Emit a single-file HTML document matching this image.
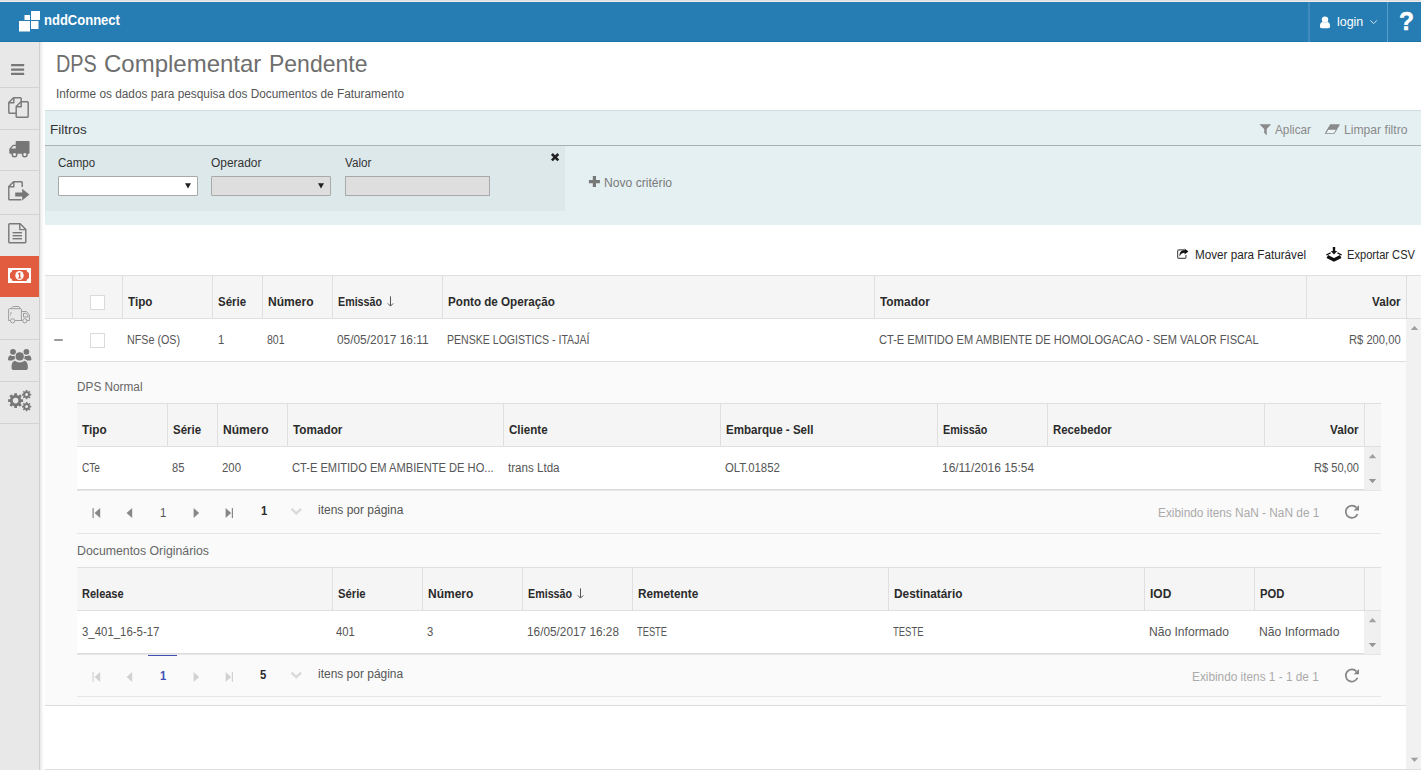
<!DOCTYPE html>
<html lang="pt-br"><head><meta charset="utf-8"><title>DPS Complementar Pendente</title>
<style>
html,body{margin:0;padding:0;background:#fff;}
body{width:1421px;height:770px;overflow:hidden;position:relative;font-family:"Liberation Sans",sans-serif;}
#app{position:absolute;left:0;top:0;width:1421px;height:770px;overflow:hidden;background:#fff;}
.t{position:absolute;white-space:nowrap;transform-origin:0 0;display:block;}
.b{position:absolute;display:block;}
svg{position:absolute;left:0;top:0;overflow:visible;}
header,nav,main,section,h1,h2{display:block;margin:0;padding:0;font:inherit;}
</style></head><body><div id="app">

<header>
<div class="b" style="left:0;top:0;width:1421px;height:2px;background:linear-gradient(#d9d9d9,#f4f4f4);"></div>
<div class="b" id="hdr" style="left:0;top:2px;width:1421px;height:40px;background:#267db3;box-sizing:border-box;border-bottom:1px solid #1f74ac;"></div>
<div class="b" style="left:1308px;top:2px;width:2px;height:40px;background:#3f8bbd;"></div>
<div class="b" style="left:1387px;top:2px;width:1px;height:40px;background:#5a9dc7;"></div>
<svg width="1421" height="42" viewBox="0 0 1421 42">
<g fill="#fff">
<rect x="19" y="21" width="11" height="10.5"/>
<rect x="31" y="11" width="9" height="9"/>
<rect x="24.5" y="15" width="5.5" height="5"/>
<rect x="31" y="21" width="7.5" height="8"/>
<!-- user -->
<circle cx="1325" cy="19.6" r="3.2"/>
<path d="M1319.900 26.300 c0-3 1.200-4.300 3-4.400 c1.200 1 3 1 4.200 0 c1.800 .1 3 1.400 3 4.400 c0 1.200-.7 1.900-1.800 1.900 h-6.600 c-1.100 0-1.800-.7-1.800-1.900 z"/>
</g>
<path d="M1370.3 20.3 l3.3 3.4 l3.3-3.4" fill="none" stroke="#cfe2ee" stroke-width="1"/>
</svg>
<span class="t" style="left:43.55px;top:11.50px;font-size:14.6px;line-height:17px;font-weight:bold;color:#fff;transform:scaleX(0.8921);">nddConnect</span>
<span class="t" style="left:1336.75px;top:13.80px;font-size:13.5px;line-height:16px;color:#fff;transform:scaleX(0.9211);">login</span>
<span class="t" style="left:1398.85px;top:6.90px;font-size:26.5px;line-height:29px;font-weight:bold;color:#fff;transform:scaleX(0.9279);-webkit-text-stroke:.5px #fff;">?</span>
</header>
<nav>
<div class="b" style="left:0;top:42px;width:39px;height:728px;background:#e8e8e8;border-right:1px solid #cfcfcf;"></div>
<div class="b" style="left:40px;top:42px;width:5px;height:728px;background:linear-gradient(90deg,#e6e6e6,#f7f7f7 45%,#fff 85%);"></div>
<div class="b" style="left:0;top:87px;width:39px;height:1px;background:#d2d2d2;"></div>
<div class="b" style="left:0;top:129px;width:39px;height:1px;background:#d2d2d2;"></div>
<div class="b" style="left:0;top:170px;width:39px;height:1px;background:#d2d2d2;"></div>
<div class="b" style="left:0;top:214px;width:39px;height:1px;background:#d2d2d2;"></div>
<div class="b" style="left:0;top:339px;width:39px;height:1px;background:#d2d2d2;"></div>
<div class="b" style="left:0;top:381px;width:39px;height:1px;background:#d2d2d2;"></div>
<div class="b" style="left:0;top:423px;width:39px;height:1px;background:#d2d2d2;"></div>
<div class="b" style="left:0;top:256px;width:39px;height:41px;background:#e25c40;"></div>
<svg width="40" height="770" viewBox="0 0 40 770">
<g fill="#777">
<!-- bars -->
<rect x="11" y="64" width="13.2" height="2.3" rx=".6"/><rect x="11" y="68.4" width="13.2" height="2.3" rx=".6"/><rect x="11" y="72.8" width="13.2" height="2.3" rx=".6"/>
</g>
<!-- files-o -->
<g fill="none" stroke="#7a7a7a" stroke-width="1.45" stroke-linejoin="round">
<path d="M16.2 113.2 H9.6 a.8 .8 0 0 1 -.8 -.8 V102.5 L13.5 97.8 H20.4 a.8 .8 0 0 1 .8 .8 V101.8"/>
<path d="M8.8 102.8 H13.8 V97.8"/>
<path d="M16.2 106.5 L20.9 101.8 H27.4 a.8 .8 0 0 1 .8 .8 V116.4 a.8 .8 0 0 1 -.8 .8 H17 a.8 .8 0 0 1 -.8 -.8 Z"/>
<path d="M16.2 106.8 H21.2 V101.8"/>
</g>
<!-- truck -->
<g fill="#777">
<path d="M16.4 141 H28.800 a.7 .7 0 0 1 .7 .7 V153 a.7 .7 0 0 1 -.7 .7 H10 a.7 .7 0 0 1 -.7 -.7 V149.200 q0-.6 .4-1 l2.700-3 q.4-.5 1-.5 H15.700 V141.700 a.7 .7 0 0 1 .7 -.7 Z M11 148.600 H15.700 V146 H13.800 q-.3 0-.5 .2 l-2.100 2.100 q-.2 .2-.2 .3 Z"/>
<circle cx="14.500" cy="154.400" r="3"/><circle cx="24.800" cy="154.400" r="3"/>
</g>
<circle cx="14.500" cy="154.400" r="1.500" fill="#eee"/><circle cx="24.800" cy="154.400" r="1.500" fill="#eee"/>
<!-- sign-out doc -->
<g fill="none" stroke="#7a7a7a" stroke-width="1.45" stroke-linejoin="round">
<path d="M22.2 187 V182.6 a.8 .8 0 0 0 -.8 -.8 H13.5 L8.8 186.5 V199 a.8 .8 0 0 0 .8 .8 H21.4"/>
<path d="M8.8 186.8 H13.8 V181.8"/>
</g>
<path d="M15.2 192.6 H22.2 V188.8 L29.3 194.6 L22.2 200.4 V196.6 H15.2 Z" fill="#777"/>
<!-- file-text-o -->
<g fill="none" stroke="#7a7a7a" stroke-width="1.45" stroke-linejoin="round">
<path d="M8.8 224.6 a.8 .8 0 0 1 .8 -.8 H20.2 L25.8 229.4 V242 a.8 .8 0 0 1 -.8 .8 H9.6 a.8 .8 0 0 1 -.8 -.8 Z"/>
<path d="M19.8 223.8 V229.6 H25.8"/>
</g>
<g fill="#777"><rect x="12.6" y="232" width="9.4" height="1.4"/><rect x="12.6" y="235" width="9.4" height="1.4"/><rect x="12.6" y="238" width="9.4" height="1.4"/></g>
<!-- money -->
<rect x="8" y="268" width="23" height="15" fill="#fff"/>
<path d="M12.5 270 H26.5 Q27 272.5 29 273 V278 Q27 278.5 26.5 281 H12.5 Q12 278.5 10 278 V273 Q12 272.5 12.5 270 Z" fill="#e25c40"/>
<ellipse cx="19.5" cy="275.5" rx="4.2" ry="4.6" fill="#fff"/>
<path d="M18 273.6 L19.4 272.4 H20.4 V277.6 H21.4 V278.6 H17.8 V277.6 H19 V274 L18 274.8 Z" fill="#e25c40"/>
<!-- truck outline -->
<g fill="none" stroke="#959595" stroke-width=".9">
<path d="M8.6 320.5 V309.5 a.8 .8 0 0 1 .8 -.8 H20.6 a.8 .8 0 0 1 .8 .8 V320.5"/>
<path d="M11 308.6 L13 306.5 H19 L20.5 308.6"/>
<path d="M21.4 311.5 H26.5 L29.4 315 V320.5 H27.2 M21.4 320.5 H22.4 M8.6 320.5 H10.2 M15 320.5 H22"/>
<path d="M23.5 313.3 H26 L27.8 315.6 V317 H23.5 Z"/>
<circle cx="12.6" cy="320.8" r="2.1"/><circle cx="24.8" cy="320.8" r="2.1"/>
<path d="M10 313 H12 M10 315 H11"/>
</g>
<!-- users -->
<g fill="#777">
<circle cx="13" cy="351.8" r="2.9"/><circle cx="26.4" cy="351.8" r="2.9"/>
<path d="M8 359.8 q0-4.2 2.6-4.6 q1 .9 2.6 .9 q.9 0 1.6-.3 q-.4 1.6 .5 3.2 q-1.900 .1 -3 1.600 H9.500 Q8 360.600 8 359.800 Z"/>
<path d="M31.400 359.800 q0-4.200-2.600-4.600 q-1 .900-2.600 .900 q-.900 0-1.600-.300 q.400 1.600-.500 3.200 q1.900 .100 3 1.600 H29.900 Q31.400 360.600 31.400 359.800 Z"/>
<circle cx="19.700" cy="356.400" r="4.100"/>
<path d="M11.500 367.400 q0-6 3.400-6.600 q2 1.700 4.800 1.700 q2.800 0 4.800-1.700 q3.400 .600 3.400 6.600 q0 2.600-2.600 2.600 H14.100 q-2.600 0-2.600-2.600 Z"/>
</g>
</svg>
<svg width="40" height="770" viewBox="0 0 40 770"><g fill="#777">
<path fill-rule="evenodd" d="M21.13 399.23 L23.07 399.22 L23.07 401.98 L21.13 401.97 L20.48 403.54 L21.86 404.91 L19.91 406.86 L18.54 405.48 L16.97 406.13 L16.98 408.07 L14.22 408.07 L14.23 406.13 L12.66 405.48 L11.29 406.86 L9.34 404.91 L10.72 403.54 L10.07 401.97 L8.13 401.98 L8.13 399.22 L10.07 399.23 L10.72 397.66 L9.34 396.29 L11.29 394.34 L12.66 395.72 L14.23 395.07 L14.22 393.13 L16.98 393.13 L16.97 395.07 L18.54 395.72 L19.91 394.34 L21.86 396.29 L20.48 397.66 Z M12.80 400.60 a2.80 2.80 0 1 0 5.60 0 a2.80 2.80 0 1 0 -5.60 0 Z"/>
<path fill-rule="evenodd" d="M29.90 393.78 L31.22 393.75 L31.22 395.45 L29.90 395.42 L29.51 396.35 L30.47 397.26 L29.26 398.47 L28.35 397.51 L27.42 397.90 L27.45 399.22 L25.75 399.22 L25.78 397.90 L24.85 397.51 L23.94 398.47 L22.73 397.26 L23.69 396.35 L23.30 395.42 L21.98 395.45 L21.98 393.75 L23.30 393.78 L23.69 392.85 L22.73 391.94 L23.94 390.73 L24.85 391.69 L25.78 391.30 L25.75 389.98 L27.45 389.98 L27.42 391.30 L28.35 391.69 L29.26 390.73 L30.47 391.94 L29.51 392.85 Z M25.10 394.60 a1.50 1.50 0 1 0 3.00 0 a1.50 1.50 0 1 0 -3.00 0 Z"/>
<path fill-rule="evenodd" d="M29.90 405.78 L31.22 405.75 L31.22 407.45 L29.90 407.42 L29.51 408.35 L30.47 409.26 L29.26 410.47 L28.35 409.51 L27.42 409.90 L27.45 411.22 L25.75 411.22 L25.78 409.90 L24.85 409.51 L23.94 410.47 L22.73 409.26 L23.69 408.35 L23.30 407.42 L21.98 407.45 L21.98 405.75 L23.30 405.78 L23.69 404.85 L22.73 403.94 L23.94 402.73 L24.85 403.69 L25.78 403.30 L25.75 401.98 L27.45 401.98 L27.42 403.30 L28.35 403.69 L29.26 402.73 L30.47 403.94 L29.51 404.85 Z M25.10 406.60 a1.50 1.50 0 1 0 3.00 0 a1.50 1.50 0 1 0 -3.00 0 Z"/>
</g></svg>
</nav>
<main>
<h1>
<span class="t" style="left:55.55px;top:51.00px;font-size:23.6px;line-height:26px;color:#6e6e6e;transform:scaleX(0.8413);">DPS</span>
<span class="t" style="left:104.15px;top:51.00px;font-size:23.6px;line-height:26px;color:#6e6e6e;transform:scaleX(1.0167);">Complementar</span>
<span class="t" style="left:268.95px;top:51.00px;font-size:23.6px;line-height:26px;color:#6e6e6e;transform:scaleX(0.9742);">Pendente</span>
</h1>
<span class="t" style="left:55.55px;top:87.00px;font-size:12px;line-height:14px;color:#555;transform:scaleX(0.9862);">Informe os dados para pesquisa dos Documentos de Faturamento</span>
<section>
<div class="b" style="left:45px;top:110px;width:1376px;height:115px;background:#e5f0f3;border-top:1px solid #d3dcdf;box-sizing:border-box;"></div>
<div class="b" style="left:45px;top:145px;width:1376px;height:1px;background:#a9b1b4;"></div>
<div class="b" style="left:45px;top:146px;width:520px;height:65px;background:#dde8eb;"></div>
<span class="t" style="left:50.15px;top:121.50px;font-size:13.4px;line-height:16px;color:#333;transform:scaleX(1.0069);">Filtros</span>
<span class="t" style="left:1274.55px;top:122.00px;font-size:13px;line-height:15px;color:#8a8a8a;transform:scaleX(0.9065);">Aplicar</span>
<span class="t" style="left:1343.55px;top:122.00px;font-size:13px;line-height:15px;color:#8a8a8a;transform:scaleX(0.9349);">Limpar filtro</span>
<span class="t" style="left:58.05px;top:156.00px;font-size:12px;line-height:14px;color:#333;transform:scaleX(0.9587);">Campo</span>
<span class="t" style="left:211.15px;top:156.00px;font-size:12px;line-height:14px;color:#333;transform:scaleX(0.9941);">Operador</span>
<span class="t" style="left:344.55px;top:156.00px;font-size:12px;line-height:14px;color:#333;transform:scaleX(0.9735);">Valor</span>
<span class="t" style="left:604.15px;top:174.80px;font-size:13px;line-height:15px;color:#7a7a7a;transform:scaleX(0.9329);">Novo critério</span>
<div class="b" style="left:58px;top:176px;width:140px;height:20px;box-sizing:border-box;border:1px solid #a9a9a9;border-radius:1px;background:#fff;"></div>
<div class="b" style="left:211px;top:176px;width:120px;height:20px;box-sizing:border-box;border:1px solid #a9a9a9;border-radius:1px;background:#dedede;"></div>
<div class="b" style="left:345px;top:176px;width:145px;height:20px;box-sizing:border-box;border:1px solid #a9a9a9;background:#dedede;"></div>
<svg width="1421" height="300" viewBox="0 0 1421 300">
<path d="M185 183.200 h6 l-3 5.400 z" fill="#222"/>
<path d="M318 183.200 h6 l-3 5.400 z" fill="#222"/>
<!-- close x -->
<path d="M551.900 154 l6.400 6.400 M558.300 154 l-6.400 6.400" stroke="#222" stroke-width="2.600" fill="none"/>
<!-- plus -->
<path d="M594.400 176.100 v11 M588.900 181.600 h11" stroke="#787878" stroke-width="3.200" fill="none"/>
<!-- filter funnel -->
<path d="M1260 124.300 h10.600 q.500 0 .200 .500 l-4.100 4.300 v5.800 q0 .400-.400 .100 l-2.100-1.900 v-4 l-4.400-4.300 q-.300-.500 .200-.500 z" fill="#8a8a8a"/>
<!-- eraser -->
<path d="M1330.200 124.300 h9.900 l-5.600 9.500 h-9.900 z" fill="#8a8a8a"/>
<path d="M1328.300 129.800 H1335.800 L1333.900 133 H1326.400 z" fill="#eef5f7"/>
<!-- share-square (mover) -->
<path d="M1184 249.800 H1179 a1.400 1.400 0 0 0 -1.400 1.400 V257 a1.400 1.400 0 0 0 1.400 1.400 H1184.600 a1.400 1.400 0 0 0 1.400 -1.400 V255" fill="none" stroke="#555" stroke-width="1.200"/>
<path d="M1188.400 251.400 L1184.600 248.400 V250.200 C1181.400 250.200 1179.300 252 1179.500 256.800 C1180.500 254.100 1182 252.800 1184.600 252.800 V254.500 Z" fill="#111"/>
<!-- download tray -->
<path d="M1332.800 247 h2.400 v4 h2 l-3.200 3.500 l-3.200-3.500 h2 z" fill="#111"/>
<path d="M1327.300 256.500 L1334 259.900 L1340.700 256.500" fill="none" stroke="#111" stroke-width="3.300" stroke-linejoin="miter"/>
<path d="M1326.300 255 L1330.600 252.900 M1341.700 255 L1337.400 252.900" fill="none" stroke="#111" stroke-width="1.300"/>
</svg>
</section>
<span class="t" style="left:1194.55px;top:248.00px;font-size:12px;line-height:14px;color:#262626;transform:scaleX(0.9732);">Mover para Faturável</span>
<span class="t" style="left:1346.55px;top:248.00px;font-size:12px;line-height:14px;color:#262626;transform:scaleX(0.9267);">Exportar CSV</span>
<section>
<div class="b" style="left:45px;top:275px;width:1376px;height:1px;background:#dfdfdf;"></div>
<div class="b" style="left:45px;top:276px;width:1376px;height:42px;background:#f5f5f5;"></div>
<div class="b" style="left:45px;top:318px;width:1376px;height:1px;background:#dfdfdf;"></div>
<div class="b" style="left:72px;top:276px;width:1px;height:42px;background:#dfdfdf;"></div>
<div class="b" style="left:122px;top:276px;width:1px;height:42px;background:#dfdfdf;"></div>
<div class="b" style="left:212px;top:276px;width:1px;height:42px;background:#dfdfdf;"></div>
<div class="b" style="left:262px;top:276px;width:1px;height:42px;background:#dfdfdf;"></div>
<div class="b" style="left:332px;top:276px;width:1px;height:42px;background:#dfdfdf;"></div>
<div class="b" style="left:442px;top:276px;width:1px;height:42px;background:#dfdfdf;"></div>
<div class="b" style="left:874px;top:276px;width:1px;height:42px;background:#dfdfdf;"></div>
<div class="b" style="left:1306px;top:276px;width:1px;height:42px;background:#dfdfdf;"></div>
<div class="b" style="left:1406px;top:276px;width:1px;height:42px;background:#dfdfdf;"></div>
<div class="b" style="left:45px;top:361px;width:1362px;height:1px;background:#dfdfdf;"></div>
<div class="b" style="left:45px;top:362px;width:1362px;height:343px;background:#fafafa;"></div>
<div class="b" style="left:45px;top:705px;width:1362px;height:1px;background:#dcdcdc;"></div>
<div class="b" style="left:1406px;top:319px;width:15px;height:450px;background:#f1f1f1;"></div>
<div class="b" style="left:45px;top:769px;width:1376px;height:1px;background:#dedede;"></div>
<div class="b" style="left:90px;top:295px;width:15px;height:15px;background:#fff;box-sizing:border-box;border:1px solid #dadada;"></div>
<div class="b" style="left:90px;top:333px;width:15px;height:15px;background:#fff;box-sizing:border-box;border:1px solid #dadada;"></div>
<div class="b" style="left:53.5px;top:338.7px;width:9.3px;height:2.8px;background:#9a9a9a;border-radius:1px;"></div>
<span class="t" style="left:128.15px;top:294.60px;font-size:12px;line-height:14px;font-weight:bold;color:#2b2b2b;transform:scaleX(0.9729);">Tipo</span>
<span class="t" style="left:217.55px;top:294.60px;font-size:12px;line-height:14px;font-weight:bold;color:#2b2b2b;transform:scaleX(0.9543);">Série</span>
<span class="t" style="left:267.95px;top:294.60px;font-size:12px;line-height:14px;font-weight:bold;color:#2b2b2b;transform:scaleX(1.0053);">Número</span>
<span class="t" style="left:338.15px;top:294.60px;font-size:12px;line-height:14px;font-weight:bold;color:#2b2b2b;transform:scaleX(0.8910);">Emissão</span>
<span class="t" style="left:448.15px;top:294.60px;font-size:12px;line-height:14px;font-weight:bold;color:#2b2b2b;transform:scaleX(0.9706);">Ponto de Operação</span>
<span class="t" style="left:880.15px;top:294.60px;font-size:12px;line-height:14px;font-weight:bold;color:#2b2b2b;transform:scaleX(0.9869);">Tomador</span>
<span class="t" style="left:1371.95px;top:294.60px;font-size:12px;line-height:14px;font-weight:bold;color:#2b2b2b;transform:scaleX(0.9748);">Valor</span>
<span class="t" style="left:126.95px;top:333.00px;font-size:12px;line-height:14px;color:#555;transform:scaleX(0.8932);">NFSe (OS)</span>
<span class="t" style="left:218.15px;top:333.00px;font-size:12px;line-height:14px;color:#555;transform:scaleX(0.9400);">1</span>
<span class="t" style="left:266.95px;top:333.00px;font-size:12px;line-height:14px;color:#555;transform:scaleX(0.8782);">801</span>
<span class="t" style="left:336.95px;top:333.00px;font-size:12px;line-height:14px;color:#555;transform:scaleX(0.9901);">05/05/2017 16:11</span>
<span class="t" style="left:447.15px;top:333.00px;font-size:12px;line-height:14px;color:#555;transform:scaleX(0.8800);">PENSKE LOGISTICS - ITAJAÍ</span>
<span class="t" style="left:878.95px;top:333.00px;font-size:12px;line-height:14px;color:#555;transform:scaleX(0.9232);">CT-E EMITIDO EM AMBIENTE DE HOMOLOGACAO - SEM VALOR FISCAL</span>
<span class="t" style="left:1348.95px;top:333.00px;font-size:12px;line-height:14px;color:#555;transform:scaleX(0.9317);">R$ 200,00</span>
<span class="t" style="left:77.05px;top:380.00px;font-size:12px;line-height:14px;color:#666;transform:scaleX(0.9826);">DPS Normal</span>
<span class="t" style="left:76.95px;top:544.00px;font-size:12px;line-height:14px;color:#666;transform:scaleX(1.0256);">Documentos Originários</span>
<div class="b" style="left:77px;top:403px;width:1304px;height:1px;background:#dfdfdf;"></div>
<div class="b" style="left:77px;top:404px;width:1304px;height:42px;background:#f5f5f5;"></div>
<div class="b" style="left:77px;top:446px;width:1304px;height:1px;background:#dfdfdf;"></div>
<div class="b" style="left:167px;top:404px;width:1px;height:42px;background:#dfdfdf;"></div>
<div class="b" style="left:217px;top:404px;width:1px;height:42px;background:#dfdfdf;"></div>
<div class="b" style="left:287px;top:404px;width:1px;height:42px;background:#dfdfdf;"></div>
<div class="b" style="left:503px;top:404px;width:1px;height:42px;background:#dfdfdf;"></div>
<div class="b" style="left:720px;top:404px;width:1px;height:42px;background:#dfdfdf;"></div>
<div class="b" style="left:937px;top:404px;width:1px;height:42px;background:#dfdfdf;"></div>
<div class="b" style="left:1047px;top:404px;width:1px;height:42px;background:#dfdfdf;"></div>
<div class="b" style="left:1264px;top:404px;width:1px;height:42px;background:#dfdfdf;"></div>
<div class="b" style="left:1364px;top:404px;width:1px;height:42px;background:#dfdfdf;"></div>
<div class="b" style="left:77px;top:447px;width:1287px;height:42px;background:#fff;"></div>
<div class="b" style="left:1364px;top:447px;width:17px;height:43px;background:#f0f0f0;"></div>
<div class="b" style="left:77px;top:489px;width:1287px;height:1px;background:#dcdcdc;"></div>
<div class="b" style="left:77px;top:490px;width:1304px;height:1px;background:#e6e6e6;"></div>
<div class="b" style="left:77px;top:533px;width:1304px;height:1px;background:#e6e6e6;"></div>
<div class="b" style="left:77px;top:567px;width:1304px;height:1px;background:#dfdfdf;"></div>
<div class="b" style="left:77px;top:568px;width:1304px;height:42px;background:#f5f5f5;"></div>
<div class="b" style="left:77px;top:610px;width:1304px;height:1px;background:#dfdfdf;"></div>
<div class="b" style="left:332px;top:568px;width:1px;height:42px;background:#dfdfdf;"></div>
<div class="b" style="left:422px;top:568px;width:1px;height:42px;background:#dfdfdf;"></div>
<div class="b" style="left:522px;top:568px;width:1px;height:42px;background:#dfdfdf;"></div>
<div class="b" style="left:632px;top:568px;width:1px;height:42px;background:#dfdfdf;"></div>
<div class="b" style="left:888px;top:568px;width:1px;height:42px;background:#dfdfdf;"></div>
<div class="b" style="left:1144px;top:568px;width:1px;height:42px;background:#dfdfdf;"></div>
<div class="b" style="left:1254px;top:568px;width:1px;height:42px;background:#dfdfdf;"></div>
<div class="b" style="left:1364px;top:568px;width:1px;height:42px;background:#dfdfdf;"></div>
<div class="b" style="left:77px;top:611px;width:1287px;height:42px;background:#fff;"></div>
<div class="b" style="left:1364px;top:611px;width:17px;height:43px;background:#f0f0f0;"></div>
<div class="b" style="left:77px;top:653px;width:1287px;height:1px;background:#dcdcdc;"></div>
<div class="b" style="left:77px;top:654px;width:1304px;height:1px;background:#e6e6e6;"></div>
<div class="b" style="left:77px;top:696px;width:1304px;height:1px;background:#e6e6e6;"></div>
<span class="t" style="left:81.95px;top:422.60px;font-size:12px;line-height:14px;font-weight:bold;color:#2b2b2b;transform:scaleX(0.9809);">Tipo</span>
<span class="t" style="left:172.55px;top:422.60px;font-size:12px;line-height:14px;font-weight:bold;color:#2b2b2b;transform:scaleX(0.9543);">Série</span>
<span class="t" style="left:222.95px;top:422.60px;font-size:12px;line-height:14px;font-weight:bold;color:#2b2b2b;transform:scaleX(1.0053);">Número</span>
<span class="t" style="left:293.15px;top:422.60px;font-size:12px;line-height:14px;font-weight:bold;color:#2b2b2b;transform:scaleX(0.9790);">Tomador</span>
<span class="t" style="left:508.95px;top:422.60px;font-size:12px;line-height:14px;font-weight:bold;color:#2b2b2b;transform:scaleX(0.9645);">Cliente</span>
<span class="t" style="left:725.95px;top:422.60px;font-size:12px;line-height:14px;font-weight:bold;color:#2b2b2b;transform:scaleX(0.9645);">Embarque - Sell</span>
<span class="t" style="left:942.95px;top:422.60px;font-size:12px;line-height:14px;font-weight:bold;color:#2b2b2b;transform:scaleX(0.8991);">Emissão</span>
<span class="t" style="left:1053.25px;top:422.60px;font-size:12px;line-height:14px;font-weight:bold;color:#2b2b2b;transform:scaleX(0.9478);">Recebedor</span>
<span class="t" style="left:1329.95px;top:422.60px;font-size:12px;line-height:14px;font-weight:bold;color:#2b2b2b;transform:scaleX(0.9748);">Valor</span>
<span class="t" style="left:81.55px;top:461.00px;font-size:12px;line-height:14px;color:#555;transform:scaleX(0.8427);">CTe</span>
<span class="t" style="left:171.55px;top:461.00px;font-size:12px;line-height:14px;color:#555;transform:scaleX(0.9309);">85</span>
<span class="t" style="left:221.55px;top:461.00px;font-size:12px;line-height:14px;color:#555;transform:scaleX(0.9481);">200</span>
<span class="t" style="left:291.55px;top:461.00px;font-size:12px;line-height:14px;color:#555;transform:scaleX(0.9274);">CT-E EMITIDO EM AMBIENTE DE HO...</span>
<span class="t" style="left:507.95px;top:461.00px;font-size:12px;line-height:14px;color:#555;transform:scaleX(0.9663);">trans Ltda</span>
<span class="t" style="left:724.75px;top:461.00px;font-size:12px;line-height:14px;color:#555;transform:scaleX(0.9474);">OLT.01852</span>
<span class="t" style="left:942.35px;top:461.00px;font-size:12px;line-height:14px;color:#555;transform:scaleX(0.9944);">16/11/2016 15:54</span>
<span class="t" style="left:1313.55px;top:461.00px;font-size:12px;line-height:14px;color:#555;transform:scaleX(0.9236);">R$ 50,00</span>
<span class="t" style="left:81.95px;top:586.60px;font-size:12px;line-height:14px;font-weight:bold;color:#2b2b2b;transform:scaleX(0.9171);">Release</span>
<span class="t" style="left:337.55px;top:586.60px;font-size:12px;line-height:14px;font-weight:bold;color:#2b2b2b;transform:scaleX(0.9407);">Série</span>
<span class="t" style="left:428.15px;top:586.60px;font-size:12px;line-height:14px;font-weight:bold;color:#2b2b2b;transform:scaleX(0.9987);">Número</span>
<span class="t" style="left:527.95px;top:586.60px;font-size:12px;line-height:14px;font-weight:bold;color:#2b2b2b;transform:scaleX(0.8931);">Emissão</span>
<span class="t" style="left:637.95px;top:586.60px;font-size:12px;line-height:14px;font-weight:bold;color:#2b2b2b;transform:scaleX(0.9824);">Remetente</span>
<span class="t" style="left:894.05px;top:586.60px;font-size:12px;line-height:14px;font-weight:bold;color:#2b2b2b;transform:scaleX(0.9876);">Destinatário</span>
<span class="t" style="left:1149.85px;top:586.60px;font-size:12px;line-height:14px;font-weight:bold;color:#2b2b2b;transform:scaleX(0.9972);">IOD</span>
<span class="t" style="left:1260.25px;top:586.60px;font-size:12px;line-height:14px;font-weight:bold;color:#2b2b2b;transform:scaleX(0.9353);">POD</span>
<span class="t" style="left:81.55px;top:625.00px;font-size:12px;line-height:14px;color:#555;transform:scaleX(0.9506);">3_401_16-5-17</span>
<span class="t" style="left:336.45px;top:625.00px;font-size:12px;line-height:14px;color:#555;transform:scaleX(0.9431);">401</span>
<span class="t" style="left:427.15px;top:625.00px;font-size:12px;line-height:14px;color:#555;transform:scaleX(0.9400);">3</span>
<span class="t" style="left:527.35px;top:625.00px;font-size:12px;line-height:14px;color:#555;transform:scaleX(0.9848);">16/05/2017 16:28</span>
<span class="t" style="left:637.35px;top:625.00px;font-size:12px;line-height:14px;color:#555;transform:scaleX(0.7752);">TESTE</span>
<span class="t" style="left:892.85px;top:625.00px;font-size:12px;line-height:14px;color:#555;transform:scaleX(0.7881);">TESTE</span>
<span class="t" style="left:1149.05px;top:625.00px;font-size:12px;line-height:14px;color:#555;transform:scaleX(1.0066);">Não Informado</span>
<span class="t" style="left:1258.65px;top:625.00px;font-size:12px;line-height:14px;color:#555;transform:scaleX(1.0128);">Não Informado</span>
<span class="t" style="left:160.35px;top:506.00px;font-size:12px;line-height:14px;color:#555;transform:scaleX(0.9400);">1</span>
<span class="t" style="left:260.75px;top:503.80px;font-size:12px;line-height:14px;font-weight:bold;color:#2b2b2b;transform:scaleX(0.9400);">1</span>
<span class="t" style="left:317.55px;top:503.00px;font-size:12px;line-height:14px;color:#555;transform:scaleX(0.9995);">itens por página</span>
<span class="t" style="left:1157.55px;top:506.00px;font-size:12px;line-height:14px;color:#aaa;transform:scaleX(0.9875);">Exibindo itens NaN - NaN de 1</span>
<div class="b" style="left:148px;top:654.8px;width:29px;height:1.4px;background:#3f51b5;"></div>
<span class="t" style="left:160.15px;top:669.00px;font-size:12px;line-height:14px;font-weight:bold;color:#3f51b5;transform:scaleX(0.9400);">1</span>
<span class="t" style="left:260.35px;top:667.60px;font-size:12px;line-height:14px;font-weight:bold;color:#2b2b2b;transform:scaleX(0.9400);">5</span>
<span class="t" style="left:317.55px;top:667.00px;font-size:12px;line-height:14px;color:#555;transform:scaleX(0.9972);">itens por página</span>
<span class="t" style="left:1192.45px;top:670.00px;font-size:12px;line-height:14px;color:#aaa;transform:scaleX(0.9848);">Exibindo itens 1 - 1 de 1</span>
<svg width="1421" height="770" viewBox="0 0 1421 770">
<g fill="#878787"><rect x="92.500" y="508.1" width="1.200" height="10"/><path d="M100.200 508.1 v10 l-5.600-5 z"/><path d="M132.200 508.1 v10 l-5.600-5 z"/><path d="M193.600 508.1 v10 l5.600-5 z"/><path d="M225.600 508.1 v10 l5.600-5 z"/><rect x="231.800" y="508.1" width="1.200" height="10"/></g><path d="M291.500 508.8 l4.800 4.600 l4.800-4.600" fill="none" stroke="#d9d9d9" stroke-width="2.300"/><path d="M1356.43 507.62 A6.1 6.1 0 1 0 1357.56 513.99" fill="none" stroke="#858585" stroke-width="1.700"/><path d="M1359.00 510.50 h-5.400 l5.400-5.400 z" fill="#858585"/>
<g fill="#d2d2d2"><rect x="92.500" y="671.9" width="1.200" height="10"/><path d="M100.200 671.9 v10 l-5.600-5 z"/><path d="M132.200 671.9 v10 l-5.600-5 z"/><path d="M193.600 671.9 v10 l5.600-5 z"/><path d="M225.600 671.9 v10 l5.600-5 z"/><rect x="231.800" y="671.9" width="1.200" height="10"/></g><path d="M291.500 672.6 l4.800 4.600 l4.800-4.600" fill="none" stroke="#d9d9d9" stroke-width="2.300"/><path d="M1356.43 671.42 A6.1 6.1 0 1 0 1357.56 677.79" fill="none" stroke="#858585" stroke-width="1.700"/><path d="M1359.00 674.30 h-5.400 l5.400-5.400 z" fill="#858585"/>
<path d="M390.5 296.4 v9.600 M387.8 303.4 l2.700 2.700 l2.700-2.700" fill="none" stroke="#555" stroke-width="1"/>
<path d="M580.5 588.4 v9.600 M577.8 595.4 l2.700 2.700 l2.700-2.700" fill="none" stroke="#555" stroke-width="1"/>
<path d="M1410.8 330.0 l3.700-4.200 l3.700 4.200 z" fill="#a0a0a0"/>
<path d="M1410.8 757.8 l3.700 4.200 l3.700-4.200 z" fill="#a0a0a0"/>
<path d="M1368.8 458.2 l3.700-4.200 l3.700 4.200 z" fill="#a0a0a0"/>
<path d="M1368.8 479.0 l3.700 4.200 l3.700-4.200 z" fill="#959595"/>
<path d="M1368.8 622.2 l3.700-4.200 l3.700 4.200 z" fill="#a0a0a0"/>
<path d="M1368.8 643.0 l3.700 4.200 l3.700-4.200 z" fill="#959595"/>
</svg>
</section>
</main>
</div></body></html>
